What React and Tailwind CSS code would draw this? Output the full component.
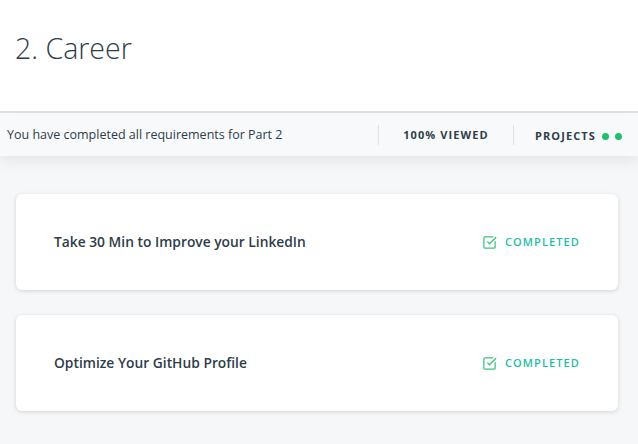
import { SquareCheckBig } from 'lucide-react'

const items = ['Take 30 Min to Improve your LinkedIn', 'Optimize Your GitHub Profile']

function ConceptCard({ title }) {
  return (
    <div className="h-[96px] bg-white rounded-md shadow-[0_1px_4px_rgba(0,0,0,0.15)] flex items-center justify-between pl-[38px] pr-[38px]">
      <span className="text-[13.8px] font-semibold text-[#2e3d49]">{title}</span>
      <span className="flex items-center gap-[8px] text-[11px] font-semibold tracking-[0.1em] text-[#1cbfa5]">
        <SquareCheckBig size={15} strokeWidth={2} className="text-[#3ac47d]" />
        COMPLETED
      </span>
    </div>
  )
}

export default function App() {
  return (
    <div className="w-[638px] h-[444px] overflow-hidden bg-[#f6f7f9] font-['Open_Sans',sans-serif]">
      {/* Header */}
      <div className="h-[113px] bg-white border-b-2 border-[#dbe2e8] pl-[15px] pt-[28px]">
        <h1 className="text-[28.5px] font-light text-[#2e3d49] leading-[40px]">2. Career</h1>
      </div>

      {/* Status bar */}
      <div className="h-[43px] bg-[#f8f9fb] flex items-center shadow-[0_6px_14px_rgba(0,0,0,0.07)] relative">
        <span className="pl-[7px] text-[12.5px] text-[#2e3d49] flex-1 pt-px">You have completed all requirements for Part 2</span>
        <div className="w-px h-[20px] bg-[#dbe2e8]" />
        <span className="w-[134px] text-center text-[11px] font-bold tracking-[0.1em] text-[#2e3d49] pt-px">100% VIEWED</span>
        <div className="w-px h-[20px] bg-[#dbe2e8]" />
        <span className="w-[124px] flex items-center pl-[21px] gap-[6px] text-[11px] font-bold tracking-[0.1em] text-[#2e3d49] pt-[3px]">
          PROJECTS
          <span className="w-[7px] h-[7px] rounded-full bg-[#1ec26a]" />
          <span className="w-[7px] h-[7px] rounded-full bg-[#1ec26a]" />
        </span>
      </div>

      {/* Concepts */}
      <div className="pl-[16px] pr-[20px] pt-[38px] flex flex-col gap-[25px]">
        {items.map(t => <ConceptCard key={t} title={t} />)}
      </div>
    </div>
  )
}
